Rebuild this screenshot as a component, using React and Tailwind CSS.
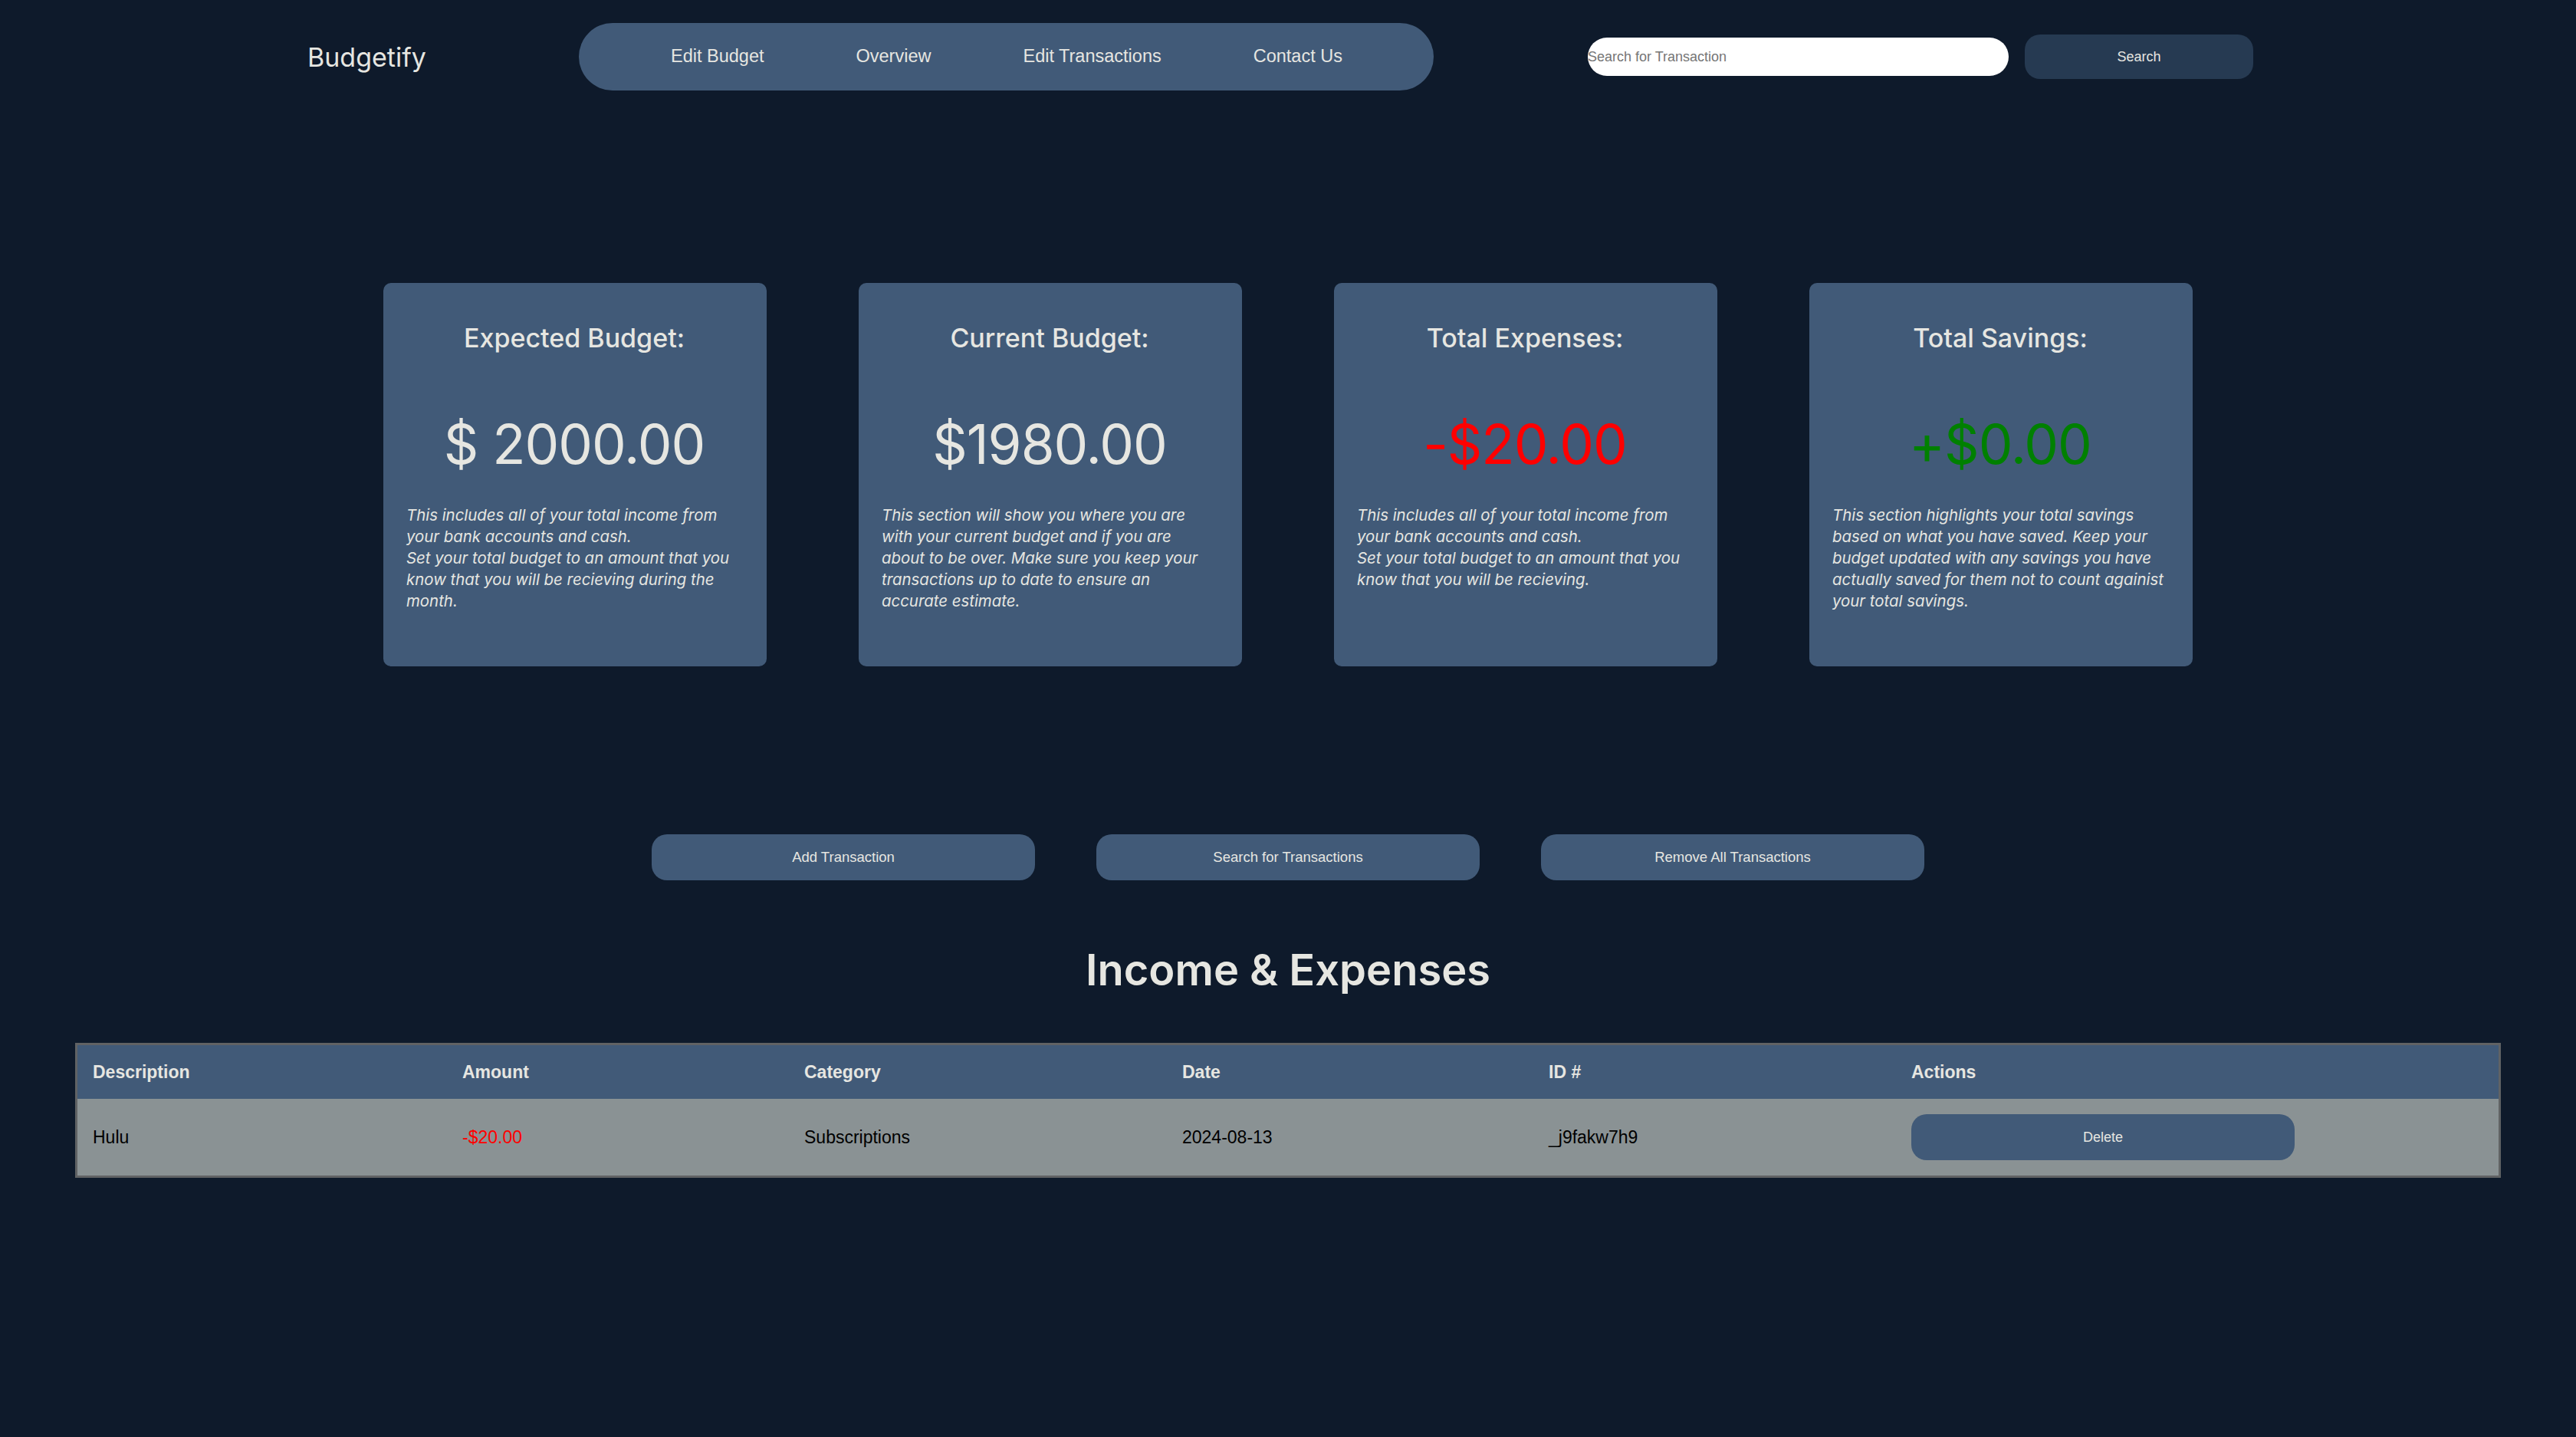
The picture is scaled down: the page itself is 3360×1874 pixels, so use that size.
import { useState } from 'react';

const cards = [
  {
    title: 'Expected Budget:',
    amount: '$ 2000.00',
    color: 'text-[#e6e6e1]',
    text: [
      'This includes all of your total income from your bank accounts and cash.',
      'Set your total budget to an amount that you know that you will be recieving during the month.'
    ]
  },
  {
    title: 'Current Budget:',
    amount: '$1980.00',
    color: 'text-[#e6e6e1]',
    text: [
      'This section will show you where you are with your current budget and if you are about to be over. Make sure you keep your transactions up to date to ensure an accurate estimate.'
    ]
  },
  {
    title: 'Total Expenses:',
    amount: '-$20.00',
    color: 'text-[#ff0000]',
    text: [
      'This includes all of your total income from your bank accounts and cash.',
      'Set your total budget to an amount that you know that you will be recieving.'
    ]
  },
  {
    title: 'Total Savings:',
    amount: '+$0.00',
    color: 'text-[#008000]',
    text: [
      'This section highlights your total savings based on what you have saved. Keep your budget updated with any savings you have actually saved for them not to count againist your total savings.'
    ]
  }
];

const transactions = [
  { id: '_j9fakw7h9', description: 'Hulu', amount: -20, category: 'Subscriptions', date: '2024-08-13' }
];

const sans = "font-['Liberation_Sans',Arial,sans-serif]";
const display = "font-['Inter','Noto_Sans',sans-serif]";

const App = () => {
  const [query, setQuery] = useState('');

  return (
    <div className={`min-h-screen w-full bg-[#0e1a2b] pb-[300px] ${sans}`}>
      <header className="flex items-center pl-[401px] pt-[30px]">
        <div className={`w-[154px] text-[34px] text-[#e6e6e1] ${display}`}>Budgetify</div>
        <nav className="ml-[200px] flex h-[88px] w-[1115px] items-center gap-[120px] rounded-full bg-[#415a78] pl-[120px] text-[23.5px] text-[#e6e6e1]">
          <a>Edit Budget</a>
          <a>Overview</a>
          <a>Edit Transactions</a>
          <a>Contact Us</a>
        </nav>
        <input
          className="ml-[201px] h-[50px] w-[549px] rounded-full bg-white text-[18px] text-black outline-none placeholder:text-[#757575]"
          placeholder="Search for Transaction"
          value={query}
          onChange={(e) => setQuery(e.target.value)}
        />
        <button className="ml-[21px] h-[58px] w-[298px] rounded-[20px] bg-[#263a52] text-[18px] text-[#e6e6e1]">
          Search
        </button>
      </header>

      <section className="mt-[251px] flex justify-center gap-[120px]">
        {cards.map((card) => (
          <div
            key={card.title}
            className={`flex h-[500px] w-[500px] flex-col rounded-[10px] bg-[#415a78] pl-[30px] pr-[32px] pt-[50px] text-[#e6e6e1] ${display}`}
          >
            <h2 className="text-center text-[34px] font-medium leading-[44px]">{card.title}</h2>
            <div className={`mt-[74px] text-center text-[71px] leading-[84px] tracking-[-1px] ${card.color}`}>
              {card.amount}
            </div>
            <div className="mt-[37px] text-[20.4px] italic leading-[28px]">
              {card.text.map((line) => (
                <p key={line}>{line}</p>
              ))}
            </div>
          </div>
        ))}
      </section>

      <section className="mt-[219px] flex justify-center gap-[80px]">
        {['Add Transaction', 'Search for Transactions', 'Remove All Transactions'].map((label) => (
          <button key={label} className="h-[60px] w-[500px] rounded-[20px] bg-[#415a78] text-[18.5px] text-[#e6e6e1]">
            {label}
          </button>
        ))}
      </section>

      <h1 className={`mt-[82px] text-center text-[56px] font-semibold leading-[70px] text-[#e6e6e1] ${display}`}>
        Income &amp; Expenses
      </h1>

      <div className="mx-[98px] mt-[60px] border-[3px] border-[#606264]">
        <table className="w-full border-collapse text-left text-[23px]">
          <thead className="bg-[#415a78] text-[#e6e6e1]">
            <tr className="h-[70px]">
              <th className="w-[480px] pl-[20px] font-bold">Description</th>
              <th className="w-[446px] pl-[22px] font-bold">Amount</th>
              <th className="w-[493px] pl-[22px] font-bold">Category</th>
              <th className="w-[478px] pl-[22px] font-bold">Date</th>
              <th className="w-[473px] pl-[22px] font-bold">ID #</th>
              <th className="pl-[22px] font-bold">Actions</th>
            </tr>
          </thead>
          <tbody className="bg-[#8a9294] text-black">
            {transactions.map((t) => (
              <tr key={t.id} className="h-[100px]">
                <td className="pl-[20px]">{t.description}</td>
                <td className={`pl-[22px] ${t.amount < 0 ? 'text-[#ff0000]' : 'text-[#008000]'}`}>
                  {t.amount < 0 ? '-' : '+'}${Math.abs(t.amount).toFixed(2)}
                </td>
                <td className="pl-[22px]">{t.category}</td>
                <td className="pl-[22px]">{t.date}</td>
                <td className="pl-[22px]">{t.id}</td>
                <td className="pl-[22px]">
                  <button className="h-[60px] w-[500px] rounded-[20px] bg-[#415a78] text-[18px] text-[#e6e6e1]">
                    Delete
                  </button>
                </td>
              </tr>
            ))}
          </tbody>
        </table>
      </div>
    </div>
  );
};

export default App;
